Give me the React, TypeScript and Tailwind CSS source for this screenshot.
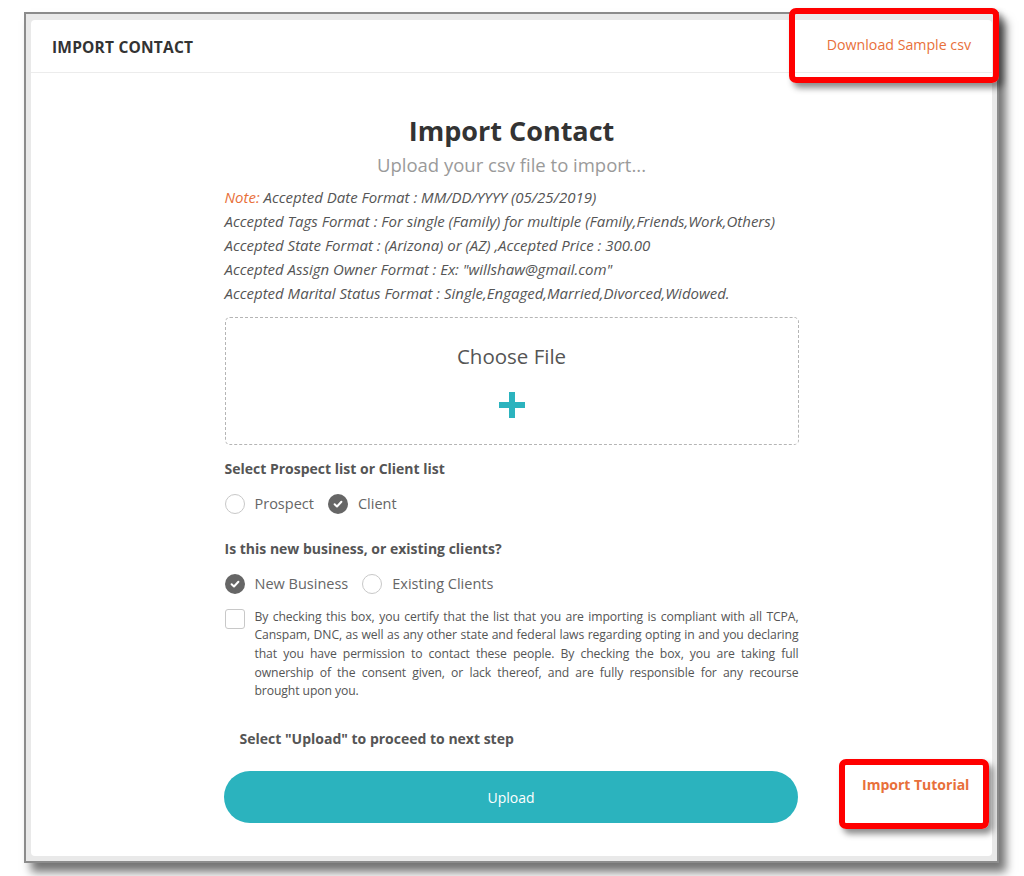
import React from 'react'

function CheckCircle() {
  return (
    <span className='flex h-5 w-5 items-center justify-center rounded-full bg-[#666666]'>
      <svg width='12' height='12' viewBox='0 0 12 12' fill='none'>
        <path d='M2.6 6.2 L5 8.5 L9.4 3.8' stroke='white' strokeWidth='2' strokeLinecap='round' strokeLinejoin='round' />
      </svg>
    </span>
  )
}

function EmptyCircle() {
  return <span className='block h-5 w-5 rounded-full border border-[#c8c8c8] bg-white'></span>
}

function Option({ checked, label }: { checked: boolean; label: string }) {
  return (
    <label className='flex items-center gap-[10px] mr-[14px]'>
      {checked ? <CheckCircle /> : <EmptyCircle />}
      <span className='text-[14.5px] text-[#666666]'>{label}</span>
    </label>
  )
}

const notes = [
  'Accepted Tags Format : For single (Family) for multiple (Family,Friends,Work,Others)',
  'Accepted State Format : (Arizona) or (AZ) ,Accepted Price : 300.00',
  'Accepted Assign Owner Format : Ex: "willshaw@gmail.com"',
  'Accepted Marital Status Format : Single,Engaged,Married,Divorced,Widowed.',
]

export default function App() {
  return (
    <div className='relative min-h-[876px] w-[1024px] bg-white pt-[12px] pl-[24px]' style={{ fontFamily: '"Open Sans", "Liberation Sans", sans-serif' }}>
      {/* screenshot frame */}
      <div className='h-[851px] w-[975px] border-2 border-[#8c8c8c] bg-[#e9e9e9] pt-[6px] pl-[5px] pr-[5px] pb-[5px] shadow-[7px_9px_9px_rgba(0,0,0,0.55)]'>
        <div className='flex h-full flex-col rounded-[4px] bg-white'>
          {/* header */}
          <div className='flex h-[53px] items-center justify-between border-b border-[#ececec] pl-[21px] pr-[21px] pt-[3px]'>
            <h1 className='text-[15.5px] font-bold tracking-[0.2px] text-[#333333]'>IMPORT CONTACT</h1>
            <a className='mt-[-6px] text-[14.2px] text-[#e8703a]'>Download Sample csv</a>
          </div>

          <div className='mx-auto w-[574px] pt-[40px]'>
            <h2 className='text-center text-[27px] font-bold leading-[36px] text-[#333333]'>Import Contact</h2>
            <p className='mt-[3px] text-center text-[18.5px] leading-[26px] text-[#9a9a9a]'>Upload your csv file to import...</p>

            <div className='mt-[7px] text-[15px] italic leading-[24px] text-[#555555]'>
              <p><span className='text-[#e8703a]'>Note:</span> Accepted Date Format : MM/DD/YYYY (05/25/2019)</p>
              {notes.map((n) => (
                <p key={n}>{n}</p>
              ))}
            </div>

            {/* file drop */}
            <div className='mt-[12px] flex h-[128px] flex-col items-center rounded-[5px] border border-dashed border-[#b5b5b5] pt-[24px]'>
              <span className='text-[20.5px] leading-[28px] text-[#555555]'>Choose File</span>
              <svg className='mt-[22px]' width='26' height='26' viewBox='0 0 26 26'>
                <rect x='10' y='0' width='6' height='26' fill='#2bb3be' />
                <rect x='0' y='10' width='26' height='6' fill='#2bb3be' />
              </svg>
            </div>

            <p className='mt-[14px] text-[14px] font-bold leading-[20px] text-[#555555]'>Select Prospect list or Client list</p>
            <div className='mt-[14px] flex items-center'>
              <Option checked={false} label='Prospect' />
              <Option checked={true} label='Client' />
            </div>

            <p className='mt-[24px] text-[14px] font-bold leading-[20px] text-[#555555]'>Is this new business, or existing clients?</p>
            <div className='mt-[14px] flex items-center'>
              <Option checked={true} label='New Business' />
              <Option checked={false} label='Existing Clients' />
            </div>

            <div className='mt-[13px] flex gap-[10px]'>
              <span className='mt-[1px] block h-5 w-5 shrink-0 rounded-[3px] border border-[#c8c8c8] bg-white'></span>
              <p className='text-justify text-[12.2px] leading-[18.7px] tracking-[-0.1px] text-[#555555]'>
                By checking this box, you certify that the list that you are importing is compliant with all TCPA, Canspam, DNC, as well as any other state and federal laws regarding opting in and you declaring that you have permission to contact these people. By checking the box, you are taking full ownership of the consent given, or lack thereof, and are fully responsible for any recourse brought upon you.
              </p>
            </div>

            <p className='mt-[28px] pl-[15px] text-[14px] font-bold leading-[20px] text-[#555555]'>Select "Upload" to proceed to next step</p>
          </div>

          {/* upload row */}
          <div className='mt-[22px] flex items-center'>
            <div className='w-[193px] shrink-0'></div>
            <button className='h-[52px] w-[574px] shrink-0 rounded-full bg-[#2bb3be] text-[14px] text-white'>Upload</button>
            <div className='pl-[64px] pb-[26px]'>
              <a className='text-[14px] font-bold text-[#e8703a]'>Import Tutorial</a>
            </div>
          </div>
        </div>
      </div>

      {/* annotation boxes */}
      <div className='absolute left-[789px] top-[8px] h-[75px] w-[210px] rounded-[7px] border-[6px] border-[#ff0000] shadow-[4px_5px_6px_rgba(0,0,0,0.45)]'></div>
      <div className='absolute left-[839px] top-[759px] h-[70px] w-[150px] rounded-[7px] border-[6px] border-[#ff0000] shadow-[4px_5px_6px_rgba(0,0,0,0.45)]'></div>
    </div>
  )
}
